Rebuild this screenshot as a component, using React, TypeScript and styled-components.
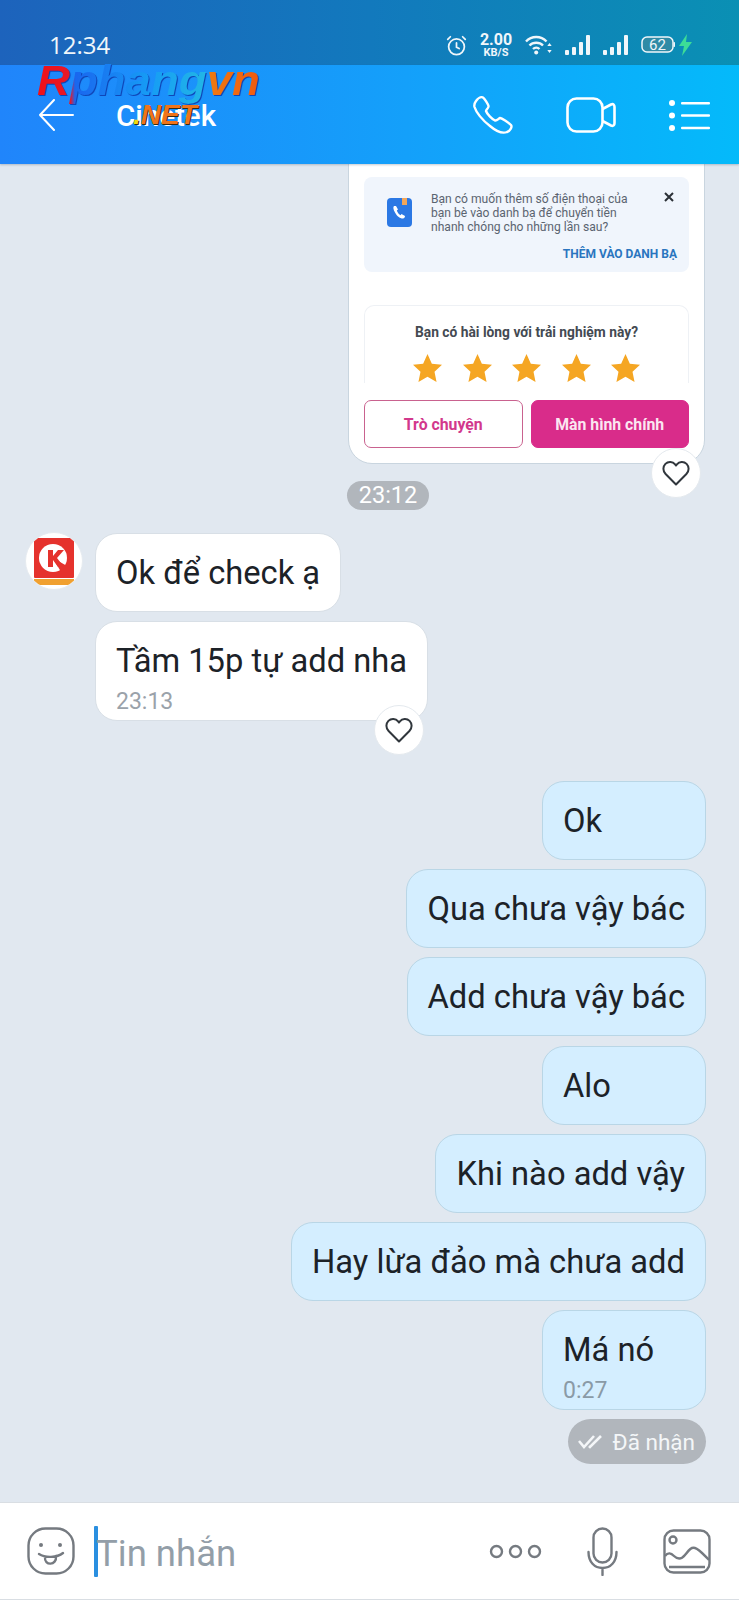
import styled, { createGlobalStyle } from 'styled-components'

const GlobalStyle = createGlobalStyle`
  html, body {
    margin: 0;
    padding: 0;
    background: #e1e8f0;
    font-family: Roboto, "Noto Sans", sans-serif;
  }
  * { box-sizing: border-box; }
`

const Screen = styled.div`
  position: relative;
  width: 739px;
  height: 1600px;
  display: flex;
  flex-direction: column;
  overflow: hidden;
  background: #e1e8f0;
`

const StatusBar = styled.div`
  height: 65px;
  flex: none;
  display: flex;
  align-items: center;
  justify-content: space-between;
  padding: 25px 47px 0 49px;
  color: #f0f6fa;
  background: linear-gradient(90deg, #1d63bc 0%, #1279bd 50%, #0a90b4 100%);
`

const Clock = styled.div`
  font-size: 24px;
  line-height: 28px;
  font-family: "Open Sans", sans-serif;
`

const StatusIcons = styled.div`
  display: flex;
  align-items: center;
  gap: 13px;
`

const Speed = styled.div`
  width: 32px;
  display: flex;
  flex-direction: column;
  align-items: center;
  font-weight: 700;
  font-size: 16px;
  line-height: 15px;

  small {
    font-size: 11px;
    line-height: 11px;
    font-weight: 700;
  }
`

const NavBar = styled.div`
  height: 99px;
  flex: none;
  display: flex;
  align-items: center;
  padding: 1px 29px 0 38px;
  color: #fff;
  background: linear-gradient(90deg, #2085fb 0%, #14a0fa 55%, #04bafa 100%);
  box-shadow: 0 1px 2px rgba(60, 80, 100, 0.3);
  z-index: 2;
`

const BackButton = styled.div`
  width: 78px;
  display: flex;
`

const Title = styled.div`
  flex: 1;
  font-size: 29.5px;
  font-weight: 500;
  line-height: 36px;
  padding-top: 2px;
`

const NavActions = styled.div`
  display: flex;
  align-items: center;
  gap: 53px;
`

const MessageList = styled.div`
  flex: 1;
  min-height: 0;
  display: flex;
  flex-direction: column;
  justify-content: flex-end;
  overflow: hidden;
  padding: 0 33px 38px 25px;
`

const SentCard = styled.div`
  position: relative;
  flex: none;
  align-self: flex-end;
  width: 357px;
  margin-right: 1px;
  border: 1px solid #c9d5df;
  border-radius: 24px;
  background: #fff;
  padding: 40px 15px 0;
`

const PhoneTip = styled.div`
  position: relative;
  display: flex;
  gap: 19px;
  height: 95px;
  padding: 15px 0 0 22px;
  border-radius: 8px;
  background: #f0f5fc;
`

const TipIcon = styled.svg`
  flex: none;
  margin-top: 6px;
`

const TipText = styled.div`
  width: 208px;
  font-size: 12.1px;
  line-height: 14px;
  color: #5b6470;
`

const TipClose = styled.div`
  position: absolute;
  top: 15px;
  right: 15px;
  display: flex;
`

const TipAction = styled.div`
  position: absolute;
  right: 12px;
  bottom: 11px;
  font-size: 12px;
  font-weight: 700;
  color: #2a75bf;
`

const RatingBox = styled.div`
  margin-top: 33px;
  height: 78px;
  padding-top: 18px;
  border: 1px solid #eef1f5;
  border-bottom: none;
  border-radius: 10px 10px 0 0;
  text-align: center;
  font-size: 13.8px;
  font-weight: 700;
  color: #444a52;
  overflow: hidden;
`

const Stars = styled.div`
  display: flex;
  justify-content: center;
  gap: 20.5px;
  margin-top: 14px;
`

const CardButtons = styled.div`
  display: grid;
  grid-template-columns: 1fr 1fr;
  gap: 8px;
  padding: 17px 0 15px;
`

const CardButton = styled.div<{ $filled?: boolean }>`
  height: 48px;
  display: flex;
  align-items: center;
  justify-content: center;
  border-radius: 7px;
  border: 1px solid ${(p) => (p.$filled ? '#d92c8a' : '#c9628f')};
  background: ${(p) => (p.$filled ? '#d92c8a' : '#fff')};
  color: ${(p) => (p.$filled ? '#fbe6f1' : '#d2388c')};
  font-size: 15.8px;
  font-weight: 700;
`

const HeartBadge = styled.div`
  position: absolute;
  right: 3px;
  bottom: -35px;
  width: 50px;
  height: 50px;
  display: flex;
  align-items: center;
  justify-content: center;
  border-radius: 50%;
  background: #fff;
  border: 1px solid #e4e9ee;
  color: #30363c;
`

const TimePill = styled.div`
  align-self: flex-start;
  flex: none;
  width: 82px;
  height: 29px;
  margin: 17px 0 23px 322px;
  border-radius: 15px;
  background: #b1b6bc;
  color: #fff;
  font-size: 23.5px;
  line-height: 29px;
  text-align: center;
`

const IncomingGroup = styled.div`
  flex: none;
  display: flex;
  gap: 12px;
  margin-bottom: 60px;
`

const Avatar = styled.div`
  width: 58px;
  height: 58px;
  flex: none;
  margin-top: -1px;
  display: flex;
  align-items: center;
  justify-content: center;
  border-radius: 50%;
  background: #fff;
  border: 1px solid #e6ebf0;
  overflow: hidden;
`

const BubbleStack = styled.div`
  display: flex;
  flex-direction: column;
  align-items: flex-start;
  gap: 9px;
`

const Bubble = styled.div<{ $mine?: boolean }>`
  position: relative;
  flex: none;
  min-width: ${(p) => (p.$mine ? '164px' : '0')};
  padding: 19px 20px 18px;
  border-radius: 22px;
  border: 1px solid ${(p) => (p.$mine ? '#b9d6e6' : '#d8dfe6')};
  background: ${(p) => (p.$mine ? '#d4eeff' : '#fff')};
  color: #1c2228;
  font-size: 32.7px;
  line-height: 40px;
  white-space: nowrap;
`

const BubbleTime = styled.div<{ $mine?: boolean }>`
  font-size: 23px;
  line-height: 24px;
  margin-top: 9px;
  margin-bottom: -12px;
  color: ${(p) => (p.$mine ? '#8a9aa6' : '#9aa2aa')};
`

const OutgoingGroup = styled.div`
  flex: none;
  display: flex;
  flex-direction: column;
  align-items: flex-end;
  gap: 9.15px;
`

const DeliveredPill = styled.div`
  flex: none;
  align-self: flex-end;
  display: flex;
  align-items: center;
  gap: 11px;
  height: 45px;
  margin-top: 9px;
  padding: 0 11px 0 10px;
  border-radius: 23px;
  background: #b1b6bc;
  color: #f4f6f8;
  font-size: 22.5px;
`

const InputBar = styled.div`
  height: 98px;
  flex: none;
  display: flex;
  align-items: center;
  padding: 0 28px 0 27px;
  background: #fff;
  border-top: 1px solid #d9dee3;
  border-bottom: 1px solid #d9dee3;
`

const Caret = styled.div`
  width: 4px;
  height: 51px;
  margin-left: 19px;
  border-radius: 1px;
  background: #2a8fe0;
`

const Placeholder = styled.div`
  flex: 1;
  font-size: 36.5px;
  color: #939ea8;
  line-height: 44px;
  padding-top: 5px;
  margin-left: -2px;
`

const InputActions = styled.div`
  display: flex;
  align-items: center;
  gap: 45px;
`

const Watermark = styled.div`
  position: absolute;
  left: 37px;
  top: 54px;
  font-family: "Liberation Sans", sans-serif;
  font-weight: 700;
  font-style: italic;
  font-size: 43px;
  line-height: 52px;
  transform: scaleX(1.06);
  transform-origin: left top;
  background: linear-gradient(90deg, #f01018 0%, #e81828 15%, #1a66ee 17%, #169cf5 50%, #22b6e6 76%, #f07a10 77%, #f05a10 100%);
  -webkit-background-clip: text;
  background-clip: text;
  color: transparent;
  filter: drop-shadow(1px 1px 0 #0f46b8);
  z-index: 3;
`

const WatermarkNet = styled.div`
  position: absolute;
  left: 133px;
  top: 99px;
  font-family: "Liberation Sans", sans-serif;
  font-weight: 700;
  font-style: italic;
  font-size: 28px;
  line-height: 32px;
  color: #f0741a;
  text-shadow: 1px 1px 0 #3a2a10;
  z-index: 3;

  span {
    color: #f5d90a;
  }
`

const Star = () => (
  <svg width="29" height="28" viewBox="0 0 24 23">
    <path fill="#f5a623" d="M12 0l3.6 7.9 8.4 1-6.2 5.8 1.7 8.3L12 18.8 4.5 23l1.7-8.3L0 8.9l8.4-1z" />
  </svg>
)

const Heart = () => (
  <svg width="28" height="26" viewBox="0 0 28 26" fill="none" stroke="currentColor" strokeWidth="2" strokeLinejoin="round">
    <path d="M14 24.5 3.6 14C.6 11 .8 6.6 3.4 3.9c2.8-2.8 7.3-2.5 9.7.5l.9 1.1.9-1.100c2.4-3 6.9-3.300 9.7-.5 2.6 2.7 2.8 7.1-.2 10.100z" />
  </svg>
)

const App = () => {
  const outgoing = ['Ok', 'Qua chưa vậy bác', 'Add chưa vậy bác', 'Alo', 'Khi nào add vậy', 'Hay lừa đảo mà chưa add']

  return (
    <Screen>
      <GlobalStyle />
      <StatusBar>
        <Clock>12:34</Clock>
        <StatusIcons>
          <svg width="21" height="21" viewBox="0 0 24 24" fill="none" stroke="currentColor" strokeWidth="2" strokeLinecap="round">
            <circle cx="12" cy="13.5" r="9" />
            <path d="M12 9v5l3 1.5M2 5l3-3M22 5l-3-3" />
          </svg>
          <Speed>
            2.00
            <small>KB/S</small>
          </Speed>
          <svg width="27" height="20" viewBox="0 0 27 20" fill="none" stroke="currentColor" strokeWidth="2.4">
            <path d="M1 6.5c5.500-6 15-6 20.500 0M4.500 10.500c3.500-3.600 10-3.600 13.500 0M8 14c1.800-1.700 4.700-1.700 6.500 0" />
            <circle cx="11.2" cy="17.5" r="2" fill="currentColor" stroke="none" />
            <path fill="currentColor" stroke="none" d="M24.5 8l2.2 3h-4.400zM24.5 18l2.2-3h-4.400z" />
          </svg>
          {[0, 1].map((s) => (
            <svg key={s} width="25" height="20" viewBox="0 0 25 20" fill="currentColor">
              <rect x="0" y="15" width="4" height="5" rx="1" />
              <rect x="7" y="12" width="4" height="8" rx="1" />
              <rect x="14" y="7" width="4" height="13" rx="1" />
              <rect x="21" y="0" width="4" height="20" rx="1" />
            </svg>
          ))}
          <svg width="51" height="22" viewBox="0 0 51 22">
            <rect x="1" y="3" width="31" height="15" rx="5" fill="#2f8ba6" stroke="currentColor" strokeWidth="1.5" />
            <text x="16.5" y="16" fontSize="15" fontFamily="Roboto" textAnchor="middle" fill="currentColor">62</text>
            <rect x="32.5" y="8" width="1.5" height="5" rx="0.7" fill="currentColor" />
            <path fill="#3ddc97" d="M46 0l-8 12h5l-2 10 10-14h-6z" />
          </svg>
        </StatusIcons>
      </StatusBar>

      <NavBar>
        <BackButton>
          <svg width="36" height="32" viewBox="0 0 36 32" fill="none" stroke="currentColor" strokeWidth="2" strokeLinecap="round" strokeLinejoin="round">
            <path d="M35 16H2M16 1 2 16l14 15" />
          </svg>
        </BackButton>
        <Title>Cinetek</Title>
        <NavActions>
          <svg width="40" height="38" viewBox="0 0 40 38" fill="none" stroke="currentColor" strokeWidth="2.4" strokeLinejoin="round">
            <path d="M3 5C5 2 8 .5 10 1.5c1.500 1 5 6.500 5.500 8.500.5 2-2.500 3.500-2.500 5 1 3 6 8 9 9.500 2 .5 3.500-2 5-2.500 2 0 9 5 11 7 1.500 2-1 6-4 7-4 1.500-10 0-17-6C9 24 3 16 1.500 11 1 9 1.500 7 3 5z" />
          </svg>
          <svg width="50" height="36" viewBox="0 0 50 36" fill="none" stroke="currentColor" strokeWidth="2.6" strokeLinejoin="round">
            <rect x="1.5" y="1.5" width="35" height="33" rx="9" />
            <path d="M36.5 12l8.500-4.500c2.500-1 3.500.5 3.500 2.500v16c0 2-1 3.500-3.500 2.500L36.500 24" />
          </svg>
          <svg width="41" height="31" viewBox="0 0 41 31" fill="currentColor">
            <circle cx="3" cy="3" r="3" />
            <circle cx="3" cy="15.5" r="3" />
            <circle cx="3" cy="28" r="3" />
            <rect x="12" y="2" width="29" height="2.4" rx="1" />
            <rect x="12" y="14.3" width="29" height="2.4" rx="1" />
            <rect x="12" y="26.8" width="29" height="2.4" rx="1" />
          </svg>
        </NavActions>
      </NavBar>

      <MessageList>
        <SentCard>
          <PhoneTip>
            <TipIcon width="26" height="29" viewBox="0 0 26 29">
              <rect x="1" y="0" width="25" height="29" rx="4" fill="#2b78e4" />
              <rect x="16" y="0" width="5" height="7" fill="#f2a65a" />
              <path d="M8 8c-1 1-1 3 1 6.500s4.500 6 8 6c1 0 2-1 2-2.500l-3.500-2-1 1.200c-1.300-.3-3-2.700-3.700-4.700l1.200-1L10 8z" fill="#fff" />
            </TipIcon>
            <TipText>Bạn có muốn thêm số điện thoại của bạn bè vào danh bạ để chuyển tiền nhanh chóng cho những lần sau?</TipText>
            <TipClose>
              <svg width="10" height="10" viewBox="0 0 10 10" stroke="#2b3036" strokeWidth="2">
                <path d="M1 1l8 8M9 1L1 9" />
              </svg>
            </TipClose>
            <TipAction>THÊM VÀO DANH BẠ</TipAction>
          </PhoneTip>
          <RatingBox>
            Bạn có hài lòng với trải nghiệm này?
            <Stars>
              {[0, 1, 2, 3, 4].map((i) => (
                <Star key={i} />
              ))}
            </Stars>
          </RatingBox>
          <CardButtons>
            <CardButton>Trò chuyện</CardButton>
            <CardButton $filled>Màn hình chính</CardButton>
          </CardButtons>
          <HeartBadge>
            <Heart />
          </HeartBadge>
        </SentCard>

        <TimePill>23:12</TimePill>

        <IncomingGroup>
          <Avatar>
            <svg width="40" height="47" viewBox="0 0 40 47">
              <rect width="40" height="40" rx="1" fill="#e5322d" />
              <rect y="41" width="40" height="6" fill="#f0a030" />
              <circle cx="19" cy="20" r="14" fill="#fff" />
              <path d="M19 20l14 8-6 6z" fill="#e5322d" />
              <path d="M14 12h5v6l5-6h6l-7 8 7 9h-6l-5-7v7h-5z" fill="#e5322d" />
            </svg>
          </Avatar>
          <BubbleStack>
            <Bubble>Ok để check ạ</Bubble>
            <Bubble>
              Tầm 15p tự add nha
              <BubbleTime>23:13</BubbleTime>
              <HeartBadge>
                <Heart />
              </HeartBadge>
            </Bubble>
          </BubbleStack>
        </IncomingGroup>

        <OutgoingGroup>
          {outgoing.map((text) => (
            <Bubble $mine key={text}>
              {text}
            </Bubble>
          ))}
          <Bubble $mine>
            Má nó
            <BubbleTime $mine>0:27</BubbleTime>
          </Bubble>
        </OutgoingGroup>

        <DeliveredPill>
          <svg width="24" height="15" viewBox="0 0 24 15" fill="none" stroke="#f4f6f8" strokeWidth="2.6">
            <path d="M1 7l5 6L16 2M11 12l1 1L23 2" />
          </svg>
          Đã nhận
        </DeliveredPill>
      </MessageList>

      <InputBar>
        <svg width="48" height="48" viewBox="0 0 48 48" fill="none" stroke="#757a80" strokeWidth="2.4" strokeLinecap="round">
          <rect x="1.5" y="1.5" width="45" height="45" rx="17" />
          <circle cx="14" cy="18" r="2" fill="#757a80" stroke="none" />
          <circle cx="33" cy="18" r="2" fill="#757a80" stroke="none" />
          <path d="M12 27c6 4 18 4 24-1M18 30c-1 9 12 9 11-1" />
        </svg>
        <Caret />
        <Placeholder>Tin nhắn</Placeholder>
        <InputActions>
          <svg width="53" height="15" viewBox="0 0 53 15" fill="none" stroke="#757a80" strokeWidth="2.4">
            <circle cx="7.5" cy="7.5" r="5.5" />
            <circle cx="26.5" cy="7.5" r="5.5" />
            <circle cx="45.5" cy="7.5" r="5.5" />
          </svg>
          <svg width="31" height="49" viewBox="0 0 31 49" fill="none" stroke="#757a80" strokeWidth="2.4" strokeLinecap="round">
            <rect x="6.5" y="1.5" width="18" height="34" rx="9" />
            <path d="M1.5 25c0 10 6 16 14 16s14-6 14-16M15.5 41v7" />
          </svg>
          <svg width="48" height="45" viewBox="0 0 48 45" fill="none" stroke="#757a80" strokeWidth="2.4">
            <rect x="1.5" y="1.5" width="45" height="42" rx="9" />
            <circle cx="10" cy="11" r="3.5" />
            <path d="M2 27c3-4 6-3 9 0s7 4 11-1 6-8 10-7 9 7 14 12M6 38h36" />
          </svg>
        </InputActions>
      </InputBar>

      <Watermark>Rphangvn</Watermark>
      <WatermarkNet>
        <span>.</span>NET
      </WatermarkNet>
    </Screen>
  )
}

export default App
